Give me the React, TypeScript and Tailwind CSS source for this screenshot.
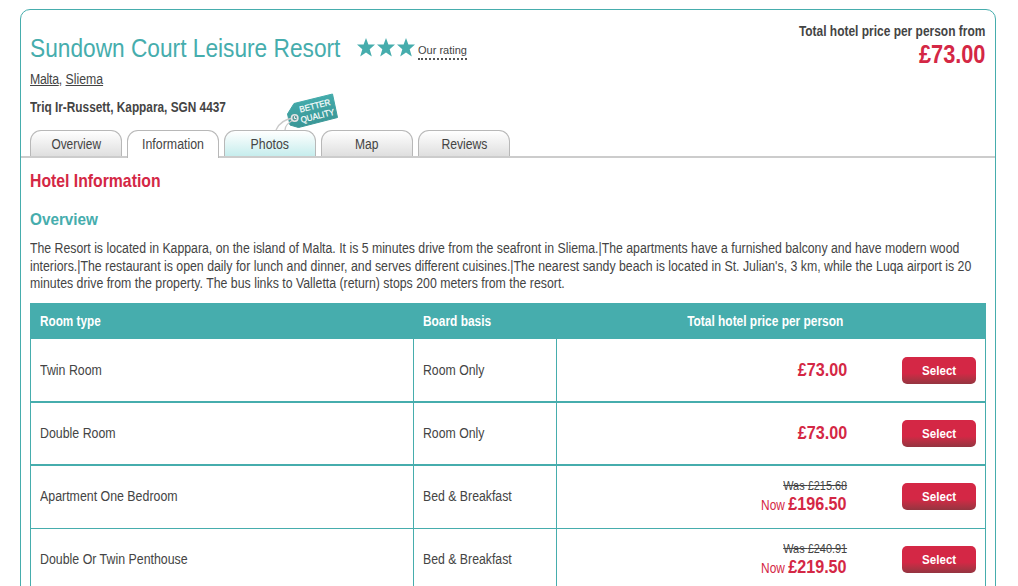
import type { ReactNode } from "react"
import clsx from "clsx"

const tabs = [
  { label: "Overview", scale: "scale-x-[0.85]" },
  { label: "Information", scale: "scale-x-[0.885]", active: true },
  { label: "Photos", scale: "scale-x-[0.88]", highlight: true },
  { label: "Map", scale: "scale-x-[0.86]" },
  { label: "Reviews", scale: "scale-x-[0.87]" },
]

const rooms = [
  { type: "Twin Room", board: "Room Only", price: "£73.00", row: "h-[64px] border-b-2" },
  { type: "Double Room", board: "Room Only", price: "£73.00", row: "h-[63px] border-b-2" },
  { type: "Apartment One Bedroom", board: "Bed & Breakfast", was: "£215.68", price: "£196.50", row: "h-[63px] border-b pb-[2px]" },
  { type: "Double Or Twin Penthouse", board: "Bed & Breakfast", was: "£240.91", price: "£219.50", row: "h-[63px] border-b pb-[2px]" },
]

// Slightly condensed text
function Narrow({ className, children }: { className: string; children: ReactNode }) {
  return <span className={clsx("inline-block whitespace-nowrap", className)}>{children}</span>
}

function Star() {
  return (
    <svg width="18" height="19" viewBox="0 0 18 19" fill="#46adad">
      <path d="M9 0 L11.4 6.6 H18 L12.7 11.2 L14.8 18.5 L9 14.4 L3.2 18.5 L5.3 11.2 L0 6.6 H6.6 Z" />
    </svg>
  )
}

function QualityTag() {
  return (
    <svg className="absolute left-[48px] -top-[41px]" width="68" height="42" viewBox="0 0 68 42">
      <defs>
        <linearGradient id="tag" x1="0" y1="0" x2="0.2" y2="1">
          <stop offset="0" stopColor="#46b0b0" />
          <stop offset="1" stopColor="#3a9696" />
        </linearGradient>
      </defs>
      <path d="M21 13.5 L59.5 4 L64.5 27.5 L25.5 37.5 L17 35 L14.5 24 Z" fill="url(#tag)" stroke="url(#tag)" strokeLinejoin="round" />
      <path d="M21 28 C12 29 6 33 3 40 M22 29 C16 32 12 36 12 40" fill="none" stroke="#c9c9c9" strokeWidth="1.3" />
      <circle cx="21.7" cy="28" r="3.2" fill="#5a9c9c" stroke="#e3e3e3" strokeWidth="1.6" />
      <path d="M21.5 26.2 V28.5 H23.3" fill="none" stroke="#eee" strokeWidth="1" />
      <g fill="#fff" stroke="#fff" strokeWidth="0.2" fontFamily="Liberation Sans, Arial, sans-serif" fontSize="8.8" textAnchor="middle">
        <text transform="translate(42.6 18.7) rotate(-14)" textLength="31.5" lengthAdjust="spacingAndGlyphs">BETTER</text>
        <text transform="translate(45.2 28.8) rotate(-14)" textLength="34.5" lengthAdjust="spacingAndGlyphs">QUALITY</text>
      </g>
    </svg>
  )
}

function Header() {
  return (
    <header className="flex h-[120px] justify-between pl-[9px] pr-[10px]">
      <div>
        <div className="mt-6 flex h-[27px] items-center">
          <h1 className="w-[327px] pt-[2px] text-[26px] leading-[27px] text-[#46adad]">
            <Narrow className="origin-left scale-x-[0.873]">Sundown Court Leisure Resort</Narrow>
          </h1>
          <div className="flex gap-[2px]">
            <Star />
            <Star />
            <Star />
          </div>
          <a className="ml-[3px] mt-[7px] h-[17px] border-b-2 border-dotted border-[#555] text-[11px] leading-[14px] text-[#444]">
            Our rating
          </a>
        </div>
        <div className="h-9 leading-9">
          <Narrow className="origin-left scale-x-[0.877]">
            <a className="tracking-[-0.3px] underline">Malta</a>, <a className="underline">Sliema</a>
          </Narrow>
        </div>
        <div className="h-[21px] font-bold leading-[21px]">
          <Narrow className="origin-left scale-x-[0.845]">Triq Ir-Russett, Kappara, SGN 4437</Narrow>
        </div>
      </div>
      <div className="flex flex-col items-end pt-3 font-bold">
        <Narrow className="h-[18px] origin-right scale-x-[0.854] leading-[18px]">Total hotel price per person from</Narrow>
        <Narrow className="origin-right scale-x-[0.87] text-[25px] leading-[29px] text-[#d42745]">£73.00</Narrow>
      </div>
    </header>
  )
}

function Tabs() {
  return (
    <nav className="flex h-7 gap-[5px] bg-[linear-gradient(#ccc,#ccc)] bg-[length:100%_2px] bg-bottom bg-no-repeat pl-[9px]">
      {tabs.map((t) => (
        <div
          key={t.label}
          className={clsx(
            "relative w-[92px] rounded-t-[11px] border border-b-0 border-[#b8b8b8] text-center leading-[27px]",
            t.active ? "h-7 bg-white" : "h-[26px] bg-linear-to-b from-white",
            !t.active && (t.highlight ? "to-[#c6eded]" : "to-[#dfdfdf]"),
          )}
        >
          <Narrow className={t.scale}>{t.label}</Narrow>
          {t.highlight && <QualityTag />}
        </div>
      ))}
    </nav>
  )
}

function RoomTable() {
  return (
    <div className="w-[956px]">
      <div className="flex h-9 bg-[#46adad] pl-[10px] font-bold leading-9 text-white">
        <div className="w-[383px]">
          <Narrow className="origin-left scale-x-[0.84]">Room type</Narrow>
        </div>
        <div className="w-[143px]">
          <Narrow className="origin-left scale-x-[0.85]">Board basis</Narrow>
        </div>
        <div className="flex w-[277px] justify-end">
          <Narrow className="origin-right scale-x-[0.852]">Total hotel price per person</Narrow>
        </div>
      </div>
      {rooms.map((r) => (
        <div key={r.type} className={clsx("relative flex border-x border-[#46adad]", r.row)}>
          <div className="flex w-[382px] items-center pl-[9px]">
            <Narrow className="origin-left scale-x-[0.884]">{r.type}</Narrow>
          </div>
          <div className={clsx("flex w-[144px] items-center border-x border-[#46adad] pl-[9px]", r.was && "-mb-[2px] pb-[2px]")}>
            <Narrow className="origin-left scale-x-[0.877]">{r.board}</Narrow>
          </div>
          <div className={clsx("flex w-[290px] flex-col items-end justify-center", r.was && "pt-[2px]")}>
            {r.was && (
              <Narrow className="h-[15px] origin-right scale-x-[0.84] text-[13px] leading-[15px] line-through">
                Was {r.was}
              </Narrow>
            )}
            <Narrow className="origin-right scale-x-[0.85] leading-[22px] text-[#d42745]">
              {r.was && "Now "}
              <b className="text-[19px]">{r.price}</b>
            </Narrow>
          </div>
          <div className="flex flex-1 items-center justify-end pr-[9px]">
            <button className="h-[27px] w-[74px] rounded-[5px] bg-linear-to-b from-[#d42745] from-60% to-[#943440] text-[13px] font-bold leading-[27px] text-white">
              <Narrow className="scale-x-[0.89]">Select</Narrow>
            </button>
          </div>
        </div>
      ))}
    </div>
  )
}

export default function App() {
  return (
    <div className="h-[586px] w-[1018px] overflow-hidden bg-white pl-5 pt-[9px] font-['Liberation_Sans',Arial,sans-serif] text-[14px] text-[#444]">
      <main className="h-[620px] w-[976px] rounded-[10px] border border-[#46adad]">
        <Header />
        <Tabs />
        <section className="pl-[9px]">
          <h2 className="h-11 pt-px text-[19px] font-bold leading-[44px] text-[#d42745]">
            <Narrow className="origin-left scale-x-[0.83]">Hotel Information</Narrow>
          </h2>
          <h3 className="h-[35px] text-[16px] font-bold leading-[35px] text-[#46adad]">
            <Narrow className="origin-left scale-x-[0.955]">Overview</Narrow>
          </h3>
          <p className="flex h-[66px] flex-col items-start pt-[3px] leading-[17.5px]">
            <Narrow className="origin-left scale-x-[0.877]">
              The Resort is located in Kappara, on the island of Malta. It is 5 minutes drive from the seafront in Sliema.|The apartments have a furnished balcony and have modern wood
            </Narrow>
            <Narrow className="origin-left scale-x-[0.88]">
              interiors.|The restaurant is open daily for lunch and dinner, and serves different cuisines.|The nearest sandy beach is located in St. Julian's, 3 km, while the Luqa airport is 20
            </Narrow>
            <Narrow className="origin-left scale-x-[0.88]">
              minutes drive from the property. The bus links to Valletta (return) stops 200 meters from the resort.
            </Narrow>
          </p>
          <RoomTable />
        </section>
      </main>
    </div>
  )
}
